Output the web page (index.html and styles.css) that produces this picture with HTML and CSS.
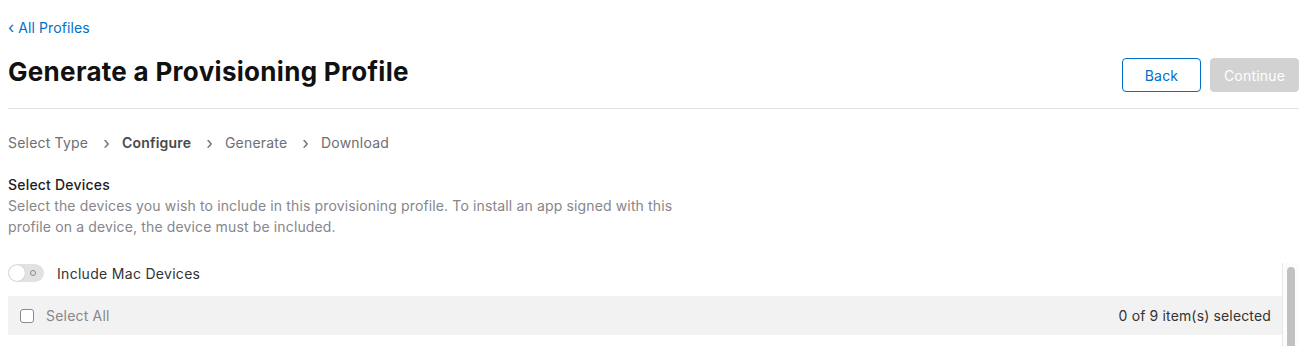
FILE: index.html
```html
<!DOCTYPE html>
<html>
<head>
<meta charset="utf-8">
<link rel="stylesheet" href="styles.css">
</head>
<body>
<div class="page">
  <a class="back-link" href="#"><span class="chev">‹</span> All Profiles</a>
  <div class="header">
    <h1 class="title">Generate a Provisioning Profile</h1>
    <div class="actions">
      <button class="btn btn-back">Back</button>
      <button class="btn btn-continue" disabled>Continue</button>
    </div>
  </div>
  <nav class="steps">
    <span class="step">Select Type</span>
    <span class="sep">›</span>
    <span class="step current">Configure</span>
    <span class="sep">›</span>
    <span class="step">Generate</span>
    <span class="sep">›</span>
    <span class="step">Download</span>
  </nav>
  <section class="devices">
    <h2 class="section-title">Select Devices</h2>
    <p class="section-desc">Select the devices you wish to include in this provisioning profile. To install an app signed with this profile on a device, the device must be included.</p>
    <div class="scroll-area">
      <div class="scroll-content">
        <label class="toggle-row">
          <span class="toggle"><span class="knob"></span><span class="off-mark"></span></span>
          <span class="toggle-label">Include Mac Devices</span>
        </label>
        <div class="table">
          <div class="table-head">
            <label class="select-all"><span class="checkbox"></span>Select All</label>
            <span class="count">0 of 9 item(s) selected</span>
          </div>
          <div class="table-body"></div>
        </div>
      </div>
      <div class="scrollbar"><div class="thumb"></div></div>
    </div>
  </section>
</div>
</body>
</html>
```
FILE: styles.css
```css
html, body {
  margin: 0;
  padding: 0;
  background: #fff;
}
body {
  font-family: "Inter", "Liberation Sans", sans-serif;
  color: #1d1d1f;
  font-size: 14px;
}
.page {
  padding: 0 3px 0 8px;
}
.back-link {
  display: block;
  margin-top: 17px;
  line-height: 20px;
  color: #0070c9;
  text-decoration: none;
  font-size: 14px;
  letter-spacing: 0.1px;
}
.chev {
  font-size: 16px;
}
.header {
  display: flex;
  align-items: flex-start;
  justify-content: space-between;
  border-bottom: 1px solid #e3e3e3;
  padding: 0 0 16px 0;
  margin-top: 13px;
}
.title {
  margin: 6px 0 0 0;
  font-size: 26px;
  font-weight: 700;
  color: #111;
  line-height: 30px;
  letter-spacing: 0.3px;
}
.actions {
  display: flex;
  gap: 9px;
  margin-top: 7px;
}
.btn {
  font-family: inherit;
  font-size: 14px;
  height: 34px;
  border-radius: 4px;
  padding: 0;
  letter-spacing: 0.2px;
}
.btn-back {
  width: 79px;
  background: #fff;
  color: #0070c9;
  border: 1px solid #0070c9;
}
.btn-continue {
  width: 89px;
  background: #d2d2d2;
  color: #fff;
  border: 1px solid #d2d2d2;
}
.steps {
  display: flex;
  align-items: center;
  margin-top: 24px;
  line-height: 20px;
  color: #6e6e73;
  letter-spacing: 0.2px;
}
.step.current {
  font-weight: 600;
  color: #494949;
}
.sep {
  margin: 0 12px 0 15px;
  font-size: 17px;
  color: #6e6e73;
}
.devices {
  margin-top: 22px;
}
.section-title {
  margin: 0;
  font-size: 14px;
  font-weight: 500;
  line-height: 20px;
  color: #1d1d1f;
  letter-spacing: 0.2px;
}
.section-desc {
  margin: 0;
  max-width: 690px;
  line-height: 21px;
  color: #86868b;
  letter-spacing: 0.14px;
}
.scroll-area {
  display: flex;
  margin-top: 26px;
  height: 90px;
}
.scroll-content {
  flex: 1;
  min-width: 0;
}
.toggle-row {
  display: flex;
  align-items: center;
  gap: 13px;
  height: 20px;
}
.toggle {
  position: relative;
  width: 36px;
  height: 18px;
  border-radius: 9px;
  background: #e2e2e2;
  display: block;
}
.knob {
  position: absolute;
  left: 1px;
  top: 1px;
  width: 16px;
  height: 16px;
  border-radius: 50%;
  background: #fff;
  box-shadow: 0 0 1px rgba(0,0,0,.3);
}
.off-mark {
  position: absolute;
  right: 8px;
  top: 6px;
  width: 4px;
  height: 4px;
  border: 1px solid #8a8a8a;
  border-radius: 50%;
}
.toggle-label {
  color: #333;
  letter-spacing: 0.3px;
}
.table {
  margin-top: 13px;
}
.table-head {
  display: flex;
  align-items: center;
  justify-content: space-between;
  background: #f2f2f2;
  height: 39px;
  padding: 0 11px 0 12px;
}
.select-all {
  display: flex;
  align-items: center;
  gap: 12px;
  color: #86868b;
  letter-spacing: 0.2px;
}
.checkbox {
  display: block;
  width: 12px;
  height: 12px;
  border: 1px solid #8a8a8a;
  border-radius: 3px;
  background: #fff;
}
.count {
  color: #333;
  letter-spacing: 0.15px;
}
.scrollbar {
  box-sizing: border-box;
  width: 17px;
  border-left: 1px solid #e8e8e8;
  padding: 4px 0 0 4px;
  background: #fcfcfc;
}
.thumb {
  width: 8px;
  height: 120px;
  border-radius: 4px;
  background: #c1c1c1;
}
```
